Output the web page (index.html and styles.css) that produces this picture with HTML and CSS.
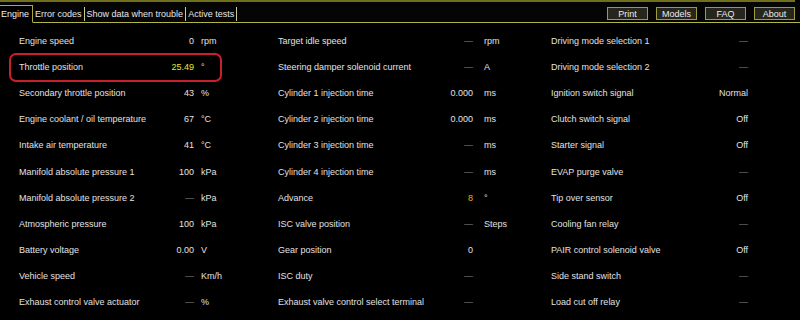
FILE: index.html
```html
<!DOCTYPE html>
<html>
<head>
<meta charset="utf-8">
<link rel="stylesheet" href="styles.css">
</head>
<body>
<div class="topline"></div>
<header class="tabbar">
  <nav class="tabs">
    <span class="tab active">Engine</span>
    <span class="tab">Error codes</span>
    <span class="tab">Show data when trouble</span>
    <span class="tab">Active tests</span>
  </nav>
  <div class="buttons">
    <span class="btn">Print</span>
    <span class="btn">Models</span>
    <span class="btn">FAQ</span>
    <span class="btn">About</span>
  </div>
</header>
<main class="grid">
  <section class="col c1">
    <div class="row"><span class="lbl">Engine speed</span><span class="val">0</span><span class="unit">rpm</span></div>
    <div class="row hl"><span class="lbl">Throttle position</span><span class="val yellow">25.49</span><span class="unit">°</span></div>
    <div class="row"><span class="lbl">Secondary throttle position</span><span class="val">43</span><span class="unit">%</span></div>
    <div class="row"><span class="lbl">Engine coolant / oil temperature</span><span class="val">67</span><span class="unit">°C</span></div>
    <div class="row"><span class="lbl">Intake air temperature</span><span class="val">41</span><span class="unit">°C</span></div>
    <div class="row"><span class="lbl">Manifold absolute pressure 1</span><span class="val">100</span><span class="unit">kPa</span></div>
    <div class="row"><span class="lbl">Manifold absolute pressure 2</span><span class="val dash">—</span><span class="unit">kPa</span></div>
    <div class="row"><span class="lbl">Atmospheric pressure</span><span class="val">100</span><span class="unit">kPa</span></div>
    <div class="row"><span class="lbl">Battery voltage</span><span class="val">0.00</span><span class="unit">V</span></div>
    <div class="row"><span class="lbl">Vehicle speed</span><span class="val dash">—</span><span class="unit">Km/h</span></div>
    <div class="row"><span class="lbl">Exhaust control valve actuator</span><span class="val dash">—</span><span class="unit">%</span></div>
  </section>
  <section class="col c2">
    <div class="row"><span class="lbl">Target idle speed</span><span class="val dash">—</span><span class="unit">rpm</span></div>
    <div class="row"><span class="lbl">Steering damper solenoid current</span><span class="val dash">—</span><span class="unit">A</span></div>
    <div class="row"><span class="lbl">Cylinder 1 injection time</span><span class="val">0.000</span><span class="unit">ms</span></div>
    <div class="row"><span class="lbl">Cylinder 2 injection time</span><span class="val">0.000</span><span class="unit">ms</span></div>
    <div class="row"><span class="lbl">Cylinder 3 injection time</span><span class="val dash">—</span><span class="unit">ms</span></div>
    <div class="row"><span class="lbl">Cylinder 4 injection time</span><span class="val dash">—</span><span class="unit">ms</span></div>
    <div class="row"><span class="lbl">Advance</span><span class="val orange">8</span><span class="unit">°</span></div>
    <div class="row"><span class="lbl">ISC valve position</span><span class="val dash">—</span><span class="unit">Steps</span></div>
    <div class="row"><span class="lbl">Gear position</span><span class="val">0</span><span class="unit"></span></div>
    <div class="row"><span class="lbl">ISC duty</span><span class="val dash">—</span><span class="unit"></span></div>
    <div class="row"><span class="lbl">Exhaust valve control select terminal</span><span class="val dash">—</span><span class="unit"></span></div>
  </section>
  <section class="col c3">
    <div class="row"><span class="lbl">Driving mode selection 1</span><span class="val dash">—</span></div>
    <div class="row"><span class="lbl">Driving mode selection 2</span><span class="val dash">—</span></div>
    <div class="row"><span class="lbl">Ignition switch signal</span><span class="val">Normal</span></div>
    <div class="row"><span class="lbl">Clutch switch signal</span><span class="val">Off</span></div>
    <div class="row"><span class="lbl">Starter signal</span><span class="val">Off</span></div>
    <div class="row"><span class="lbl">EVAP purge valve</span><span class="val dash">—</span></div>
    <div class="row"><span class="lbl">Tip over sensor</span><span class="val">Off</span></div>
    <div class="row"><span class="lbl">Cooling fan relay</span><span class="val dash">—</span></div>
    <div class="row"><span class="lbl">PAIR control solenoid valve</span><span class="val">Off</span></div>
    <div class="row"><span class="lbl">Side stand switch</span><span class="val dash">—</span></div>
    <div class="row"><span class="lbl">Load cut off relay</span><span class="val dash">—</span></div>
  </section>
</main>
</body>
</html>
```
FILE: styles.css
```css
* { box-sizing: border-box; }
html, body {
  margin: 0;
  padding: 0;
  background: #000;
  color: #e2e2e2;
  font-family: "Liberation Sans", Arial, sans-serif;
  font-size: 9px;
  overflow: hidden;
  height: 320px;
}
.topline {
  width: 795px;
  height: 2px;
  background: #6f6f1c;
}
.tabbar {
  display: flex;
  align-items: flex-end;
  height: 21px;
  border-bottom: 1px solid #b3b348;
  background: #050505;
}
.tabs {
  display: flex;
  align-items: flex-end;
  height: 100%;
}
.tab {
  display: flex;
  align-items: center;
  height: 14px;
  margin-bottom: 1px;
  padding: 0 2px 0 2px;
  border-right: 1px solid #c8c898;
  color: #e6e6e6;
  white-space: nowrap;
}
.tab.active {
  height: 18px;
  margin-bottom: -1px;
  padding: 0 3px 0 1px;
  background: #000;
  border-top: 1px solid #a8a840;
  border-right: 1px solid #a8a840;
  border-bottom: 1px solid #000;
  color: #f0f0f0;
}
.buttons {
  display: flex;
  gap: 8px;
  margin-left: auto;
  margin-right: 5px;
  margin-bottom: 2px;
}
.btn {
  display: flex;
  align-items: center;
  justify-content: center;
  width: 41px;
  height: 13px;
  background: #26261c;
  border: 1px solid #9c9c3e;
  color: #ececec;
}
.grid {
  display: grid;
  grid-template-columns: 259px 273px 1fr;
  padding: 5px 0 0 19px;
}
.col {
  display: flex;
  flex-direction: column;
}
.row {
  display: grid;
  align-items: center;
  height: 26.1px;
  white-space: nowrap;
}
.c1 .row { grid-template-columns: 135px 40px 7px auto; }
.c2 .row { grid-template-columns: 155px 40px 11px auto; }
.c3 .row { grid-template-columns: 140px 57px; }
.c1 .unit, .c2 .unit { grid-column: 4; }
.val { text-align: right; }
.dash { color: #8a8a8a; }
.yellow { color: #e6e62a; }
.orange { color: #e8b400; }
.hl { position: relative; }
.hl::before {
  content: "";
  position: absolute;
  left: -10px;
  right: 56px;
  top: -1px;
  bottom: -2px;
  border: 2px solid #c8202c;
  border-radius: 7px;
}
```
